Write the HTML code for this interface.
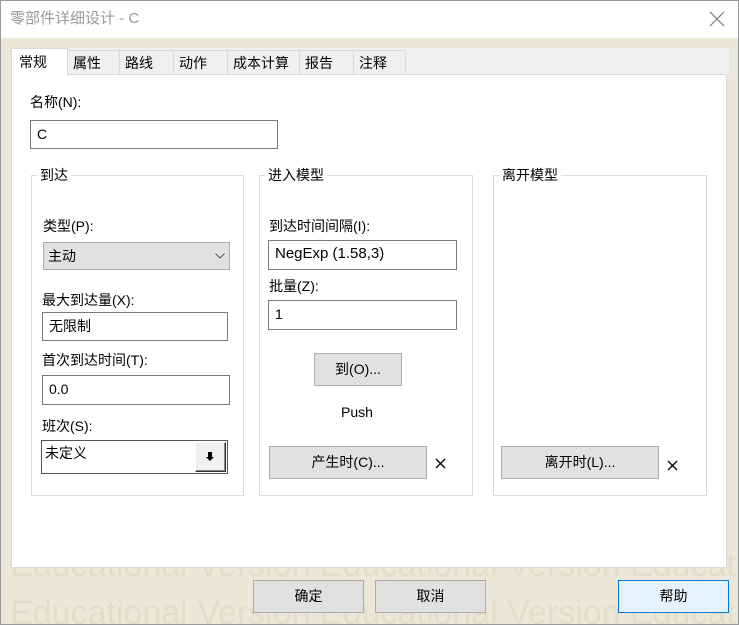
<!DOCTYPE html>
<html><head><meta charset="utf-8"><style>
*{box-sizing:border-box;margin:0;padding:0}
html{width:739px;height:625px;overflow:hidden}
body{width:739px;height:625px;overflow:hidden;background:#ebe8d9;font-family:"Liberation Sans","Noto Sans CJK SC",sans-serif;font-size:14px;color:#000;position:relative}
.a{position:absolute}
.t{position:absolute;white-space:nowrap;line-height:16px}
.inp{position:absolute;background:#fff;border:1px solid #7a7a7a;padding:0 0 0 6px;line-height:26px}
.btn{position:absolute;background:#e1e1e1;border:1px solid #adadad;text-align:center}
.grp{position:absolute;border:1px solid #dcdcdc}
.gl{position:absolute;background:#fff;padding:0 3px;top:-9px;left:5px;line-height:16px}
.tab{position:absolute;top:50px;height:24px;background:#f0f0f0;border:1px solid #d9d9d9;border-bottom:none;line-height:24px;padding-left:5px}
.wm{position:absolute;color:#e2decb;font-size:34px;white-space:nowrap;line-height:34px}
</style></head><body>
<div class="a" style="left:0;top:0;width:739px;height:625px;overflow:hidden">
<div class="wm" style="left:10px;top:548px">Educational Version Educational Version Educational</div>
<div class="wm" style="left:10px;top:596px">Educational Version Educational Version Educational</div>
</div>
<div class="a" style="left:0;top:0;width:739px;height:625px;border:1px solid #9a9a9a"></div>
<div class="a" style="left:1px;top:1px;width:737px;height:37px;background:#fff"></div>
<div class="t" style="left:10px;top:10px;color:#999;font-size:15px;line-height:18px">零部件详细设计 - C</div>
<svg class="a" style="left:709px;top:11px" width="16" height="16"><path d="M1 1L15 15M15 1L1 15" stroke="#777" stroke-width="1.2"/></svg>
<div class="a" style="left:11px;top:48px;width:718px;height:27px;background:#f0f0f0"></div>
<div class="tab" style="left:67px;width:53px">属性</div>
<div class="tab" style="left:119px;width:55px">路线</div>
<div class="tab" style="left:173px;width:55px">动作</div>
<div class="tab" style="left:227px;width:73px">成本计算</div>
<div class="tab" style="left:299px;width:55px">报告</div>
<div class="tab" style="left:353px;width:53px">注释</div>
<div class="a" style="left:11px;top:74px;width:716px;height:494px;background:#fff;border:1px solid #d9d9d9"></div>
<div class="a" style="left:11px;top:48px;width:57px;height:28px;background:#fff;border:1px solid #d9d9d9;border-bottom:none;line-height:26px;padding-left:7px">常规</div>
<div class="t" style="left:30px;top:94px">名称(N):</div>
<div class="inp" style="left:30px;top:120px;width:248px;height:29px">C</div>
<div class="grp" style="left:31px;top:175px;width:213px;height:321px"><span class="gl">到达</span></div>
<div class="grp" style="left:259px;top:175px;width:214px;height:321px"><span class="gl">进入模型</span></div>
<div class="grp" style="left:493px;top:175px;width:214px;height:321px"><span class="gl">离开模型</span></div>
<div class="t" style="left:43px;top:218px">类型(P):</div>
<div class="btn" style="left:43px;top:242px;width:187px;height:28px;text-align:left;padding-left:4px;line-height:26px">主动</div>
<svg class="a" style="left:215px;top:253px" width="10" height="6"><path d="M0.5 0.5L5 5L9.5 0.5" stroke="#555" fill="none"/></svg>
<div class="t" style="left:42px;top:292px">最大到达量(X):</div>
<div class="inp" style="left:42px;top:312px;width:186px;height:29px">无限制</div>
<div class="t" style="left:42px;top:352px">首次到达时间(T):</div>
<div class="inp" style="left:42px;top:375px;width:188px;height:30px">0.0</div>
<div class="t" style="left:42px;top:418px">班次(S):</div>
<div class="inp" style="left:41px;top:440px;width:187px;height:34px;border-color:#555;line-height:24px;padding-left:3px">未定义</div>
<div class="a" style="left:195px;top:442px;width:31px;height:30px;background:#f0f0f0;border:1px solid #333;border-top-color:#fff;border-left-color:#fff;box-shadow:inset -1px -1px #888"></div>
<svg class="a" style="left:206px;top:452px" width="8" height="9"><path d="M2 0h4v5h2L4 9L0 5h2z" fill="#000"/></svg>
<div class="t" style="left:269px;top:218px">到达时间间隔(I):</div>
<div class="inp" style="left:268px;top:240px;width:189px;height:30px;font-size:15px">NegExp (1.58,3)</div>
<div class="t" style="left:269px;top:278px">批量(Z):</div>
<div class="inp" style="left:268px;top:300px;width:189px;height:30px">1</div>
<div class="btn" style="left:314px;top:353px;width:88px;height:33px;line-height:31px">到(O)...</div>
<div class="t" style="left:341px;top:404px">Push</div>
<div class="btn" style="left:269px;top:446px;width:158px;height:33px;line-height:31px">产生时(C)...</div>
<svg class="a" style="left:435px;top:458px" width="11" height="11"><path d="M1 1L10 10M10 1L1 10" stroke="#000" stroke-width="1.3"/></svg>
<div class="btn" style="left:501px;top:446px;width:158px;height:33px;line-height:31px">离开时(L)...</div>
<svg class="a" style="left:667px;top:460px" width="11" height="11"><path d="M1 1L10 10M10 1L1 10" stroke="#000" stroke-width="1.3"/></svg>
<div class="btn" style="left:253px;top:580px;width:111px;height:33px;line-height:31px">确定</div>
<div class="btn" style="left:375px;top:580px;width:111px;height:33px;line-height:31px">取消</div>
<div class="btn" style="left:618px;top:580px;width:111px;height:33px;line-height:31px;background:#e5f1fb;border-color:#0078d7">帮助</div>
</body></html>
